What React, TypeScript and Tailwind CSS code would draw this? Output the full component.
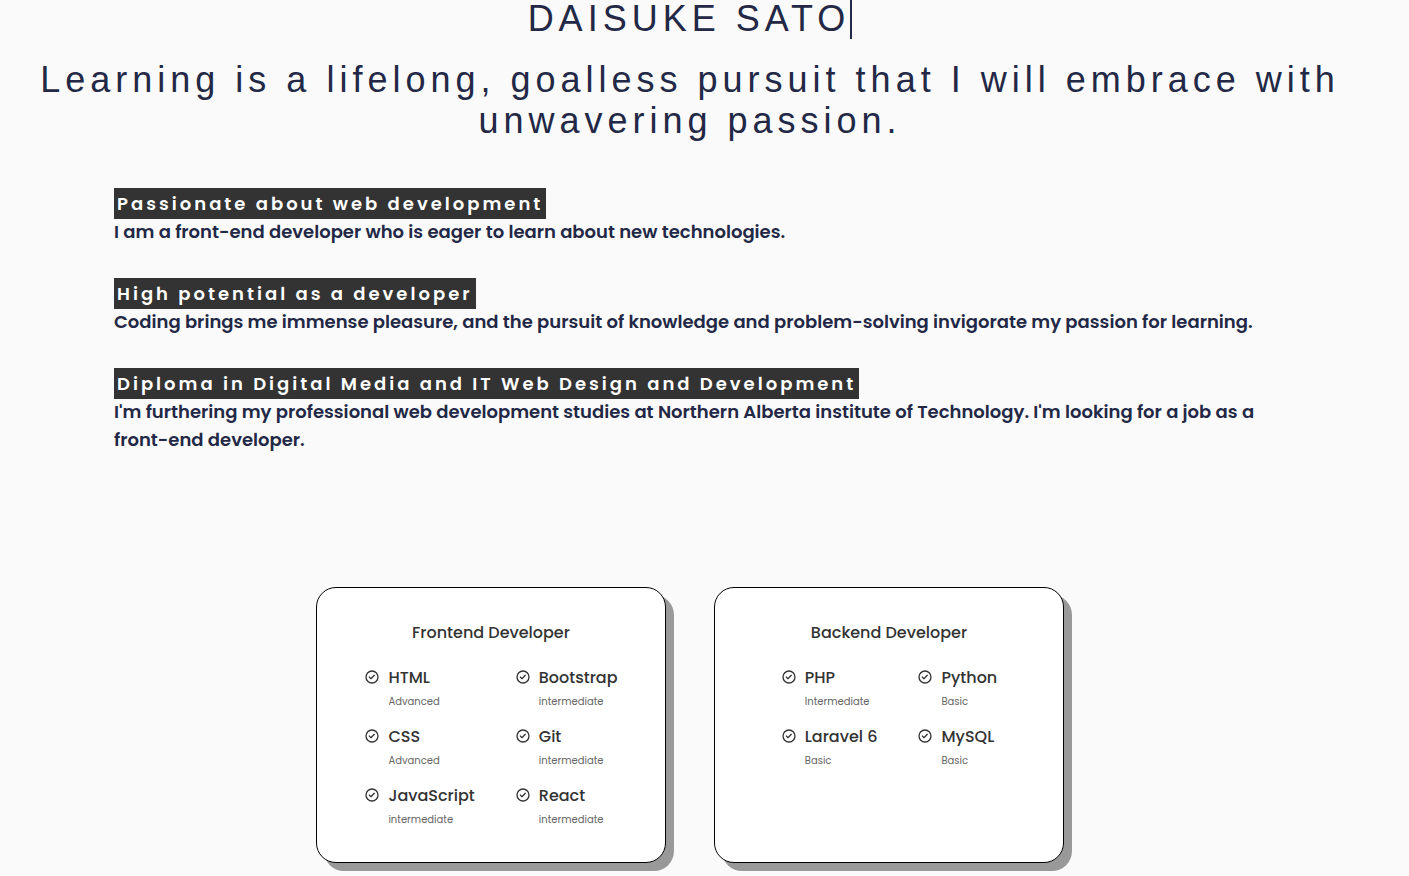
type Skill = { name: string; level: string };

const strengths = [
  {
    title: "Passionate about web development",
    text: "I am a front-end developer who is eager to learn about new technologies.",
  },
  {
    title: "High potential as a developer",
    text: "Coding brings me immense pleasure, and the pursuit of knowledge and problem-solving invigorate my passion for learning.",
  },
  {
    title: "Diploma in Digital Media and IT Web Design and Development",
    text: "I'm furthering my professional web development studies at Northern Alberta institute of Technology. I'm looking for a job as a front-end developer.",
  },
];

const frontend: Skill[][] = [
  [
    { name: "HTML", level: "Advanced" },
    { name: "CSS", level: "Advanced" },
    { name: "JavaScript", level: "intermediate" },
  ],
  [
    { name: "Bootstrap", level: "intermediate" },
    { name: "Git", level: "intermediate" },
    { name: "React", level: "intermediate" },
  ],
];

const backend: Skill[][] = [
  [
    { name: "PHP", level: "Intermediate" },
    { name: "Laravel 6", level: "Basic" },
  ],
  [
    { name: "Python", level: "Basic" },
    { name: "MySQL", level: "Basic" },
  ],
];

function CheckCircle() {
  return (
    <svg viewBox="0 0 24 24" className="mt-[3px] size-4 shrink-0" fill="currentColor" aria-hidden="true">
      <path d="M14.72,8.79l-4.29,4.3L8.78,11.44a1,1,0,1,0-1.41,1.41l2.35,2.36a1,1,0,0,0,.71.29,1,1,0,0,0,.7-.29l5-5a1,1,0,0,0,0-1.42A1,1,0,0,0,14.72,8.79ZM12,2A10,10,0,1,0,22,12,10,10,0,0,0,12,2Zm0,18a8,8,0,1,1,8-8A8,8,0,0,1,12,20Z" />
    </svg>
  );
}

function SkillCard({ title, columns }: { title: string; columns: Skill[][] }) {
  return (
    <section className="w-[350px] rounded-[20px] border border-black bg-white pt-8 pb-[35px] text-[#333] shadow-[8px_8px_0_#999]">
      <h3 className="mb-5 text-center text-base leading-[26px] font-medium">{title}</h3>
      <div className="flex justify-center gap-10">
        {columns.map((column, i) => (
          <ul key={i} className="flex flex-col gap-4">
            {column.map((skill) => (
              <li key={skill.name} className="flex gap-2">
                <CheckCircle />
                <div>
                  <h4 className="mb-1 text-base leading-6 font-medium">{skill.name}</h4>
                  <p className="text-[10px] leading-[15px] text-[#666]">{skill.level}</p>
                </div>
              </li>
            ))}
          </ul>
        ))}
      </div>
    </section>
  );
}

export default function App() {
  return (
    <div className="min-h-screen overflow-hidden bg-[#fafafa] pr-[29px] pb-3 font-['Poppins','Inter',sans-serif] text-[#222845]">
      <header className="px-8 text-center font-['Helvetica','Liberation_Sans',sans-serif] text-4xl leading-[41px] tracking-[5px]">
        <h1 className="flex justify-center">
          <span className="border-r-2 border-[#222845] pb-0.5 leading-[37px]">DAISUKE SATO</span>
        </h1>
        <p className="mt-5">
          Learning is a lifelong, goalless pursuit that I will embrace with unwavering passion.
        </p>
      </header>

      <main>
        <div className="mx-auto mt-12 flex max-w-6xl flex-col gap-[33px] text-lg leading-7 font-semibold">
          {strengths.map((item) => (
            <section key={item.title}>
              <h2 className="leading-[29px] font-semibold tracking-[3px] text-white">
                <span className="bg-[#333] p-[3px]">{item.title}</span>
              </h2>
              <p>{item.text}</p>
            </section>
          ))}
        </div>

        <div className="mt-[133px] flex flex-wrap justify-center gap-12">
          <SkillCard title="Frontend Developer" columns={frontend} />
          <SkillCard title="Backend Developer" columns={backend} />
        </div>
      </main>
    </div>
  );
}
